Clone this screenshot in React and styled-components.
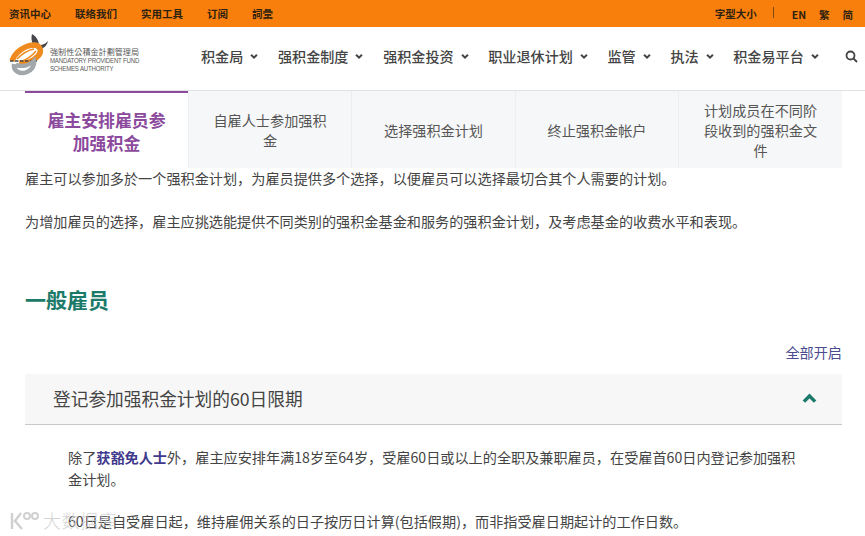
import React from "react";
import styled, { createGlobalStyle } from "styled-components";

const Global = createGlobalStyle`
  html, body { margin: 0; padding: 0; height: 536px; overflow: hidden; background: #fff; }
  body { font-family: "Noto Sans CJK SC", "Noto Sans", sans-serif; color: #333; }
  * { box-sizing: border-box; }
`;

const Page = styled.div`
  position: relative;
  width: 865px;
  height: 536px;
  overflow: hidden;
`;

const TopBar = styled.div`
  height: 27px;
  background: #f97f0c;
  display: flex;
  align-items: center;
  justify-content: space-between;
  padding: 0 12px 1px 9px;
  font-size: 10.5px;
  font-weight: 700;
  color: #2e2210;
`;

const TopGroup = styled.div`
  display: flex;
  align-items: center;
  gap: ${(p) => p.$gap}px;
`;

const SizeLabel = styled.span`
  margin-right: 3px;
`;

const Divider = styled.span`
  width: 1px;
  height: 11px;
  background: #7a4a10;
  margin: 0 5px 2px 0;
`;

const Lang = styled.span`
  padding-top: 2px;
`;

const Header = styled.header`
  height: 64px;
  display: flex;
  align-items: center;
  border-bottom: 1px solid #e2e2e2;
  padding: 0 7px 5px 9px;
`;

const Logo = styled.div`
  display: flex;
  align-items: center;
  gap: 1px;
  width: 192px;
  flex: none;
  margin-top: 4px;

  svg {
    margin-bottom: 6px;
    flex: none;
  }
`;

const LogoText = styled.div`
  display: flex;
  flex-direction: column;
  color: #5a5a5a;
  padding-top: 2px;
`;

const LogoCn = styled.span`
  font-family: "Noto Sans CJK TC", serif;
  font-size: 8.1px;
  line-height: 11px;
  white-space: nowrap;
`;

const LogoEn = styled.span`
  font-family: "Liberation Sans", sans-serif;
  font-size: 8px;
  line-height: 8px;
  letter-spacing: -0.25px;
  white-space: nowrap;
  transform: scaleX(0.76);
  transform-origin: left center;
`;

const Nav = styled.nav`
  flex: 1;
  display: flex;
  align-items: center;
  gap: 18.7px;
  font-size: 14.1px;
  font-weight: 500;
  color: #444;
`;

const NavItem = styled.div`
  display: flex;
  align-items: center;
  gap: 6px;
  white-space: nowrap;
`;

const SearchBtn = styled.span`
  margin-left: auto;
  display: flex;
`;

const Tabs = styled.div`
  margin: 0 23px 0 25px;
  display: grid;
  grid-template-columns: 163px 163px 164px 163px 164px;
  height: 77px;
`;

const Tab = styled.div`
  display: flex;
  align-items: center;
  justify-content: center;
  text-align: center;
  padding: 0 ${(p) => (p.$active ? 20 : 24)}px;
  background: ${(p) => (p.$active ? "#fff" : "#f6f7f8")};
  border-top: ${(p) => (p.$active ? "2px solid #8b4a9c" : "none")};
  border-left: ${(p) => (p.$active ? "none" : "1px solid #eceeef")};
  color: ${(p) => (p.$active ? "#8b4a9c" : "#555")};
  font-size: ${(p) => (p.$active ? 16.9 : 14.15)}px;
  font-weight: ${(p) => (p.$active ? 700 : 400)};
  line-height: ${(p) => (p.$active ? 23 : 20)}px;
`;

const Main = styled.main`
  margin-top: -1px;
  padding: 0 23px 0 25px;
`;

const Para = styled.p`
  margin: 0 0 ${(p) => p.$after || 0}px;
  font-size: 14.15px;
  line-height: 22px;
  color: #444;
`;

const Heading = styled.h2`
  margin: 51px 0 0;
  font-size: 21px;
  line-height: 32px;
  font-weight: 700;
  color: #1c7a6a;
`;

const OpenAll = styled.div`
  margin-top: 25px;
  height: 24px;
  line-height: 24px;
  text-align: right;
  font-size: 14.15px;
  color: #4b4b8f;
`;

const AccHead = styled.div`
  margin-top: 10px;
  height: 51px;
  background: #f7f7f7;
  border-bottom: 1px solid #c9c9c9;
  display: flex;
  align-items: center;
  justify-content: space-between;
  padding: 0 25px 2px 28px;
  font-size: 17.7px;
  color: #444;
`;

const AccBody = styled.div`
  padding: 21px 44px 0 43px;
`;

const Strong = styled.b`
  color: #3f3a8c;
  font-weight: 700;
`;

const Watermark = styled.div`
  position: absolute;
  left: 9px;
  bottom: 3px;
  display: flex;
  align-items: center;
  gap: 3px;
  color: rgba(205, 205, 205, 0.85);
  font-size: 18px;
  font-weight: 300;
  letter-spacing: 0.5px;
  line-height: 26px;
  pointer-events: none;
`;

const Chevron = ({ up, size = 12, color = "#444", w = 2.4 }) => (
  <svg width={size} height={size} viewBox="0 0 12 12" fill="none">
    <path d={up ? "M1.5 8.5 L6 4 L10.5 8.5" : "M2.5 4.5 L6 8 L9.5 4.5"} stroke={color} strokeWidth={w} />
  </svg>
);

const navItems = ["积金局", "强积金制度", "强积金投资", "职业退休计划", "监管", "执法", "积金易平台"];

export default function App() {
  return (
    <Page>
      <Global />
      <TopBar>
        <TopGroup $gap={24}>
          <span>资讯中心</span>
          <span>联络我们</span>
          <span>实用工具</span>
          <span>订阅</span>
          <span>詞彙</span>
        </TopGroup>
        <TopGroup $gap={13}>
          <SizeLabel>字型大小</SizeLabel>
          <Divider />
          <Lang>EN</Lang>
          <Lang>繁</Lang>
          <Lang>简</Lang>
        </TopGroup>
      </TopBar>
      <Header>
        <Logo>
          <svg width="40" height="44" viewBox="0 0 40 44" fill="none">
            <path d="M23 1 C27 3 30 8 30 12 C35 12 37 10 39 8 C38 13 34 16 30 16 C25 16 21 8 23 1Z" fill="#46464a" />
            <path d="M3 28 C6 19 16 12 26 12 C32 13 33 19 29 23 C25 28 17 31 10 30" stroke="#ee8a1e" strokeWidth="5.5" />
            <path d="M8 26 C13 21 19 17 25 16 M11 29 C17 27 23 23 27 18" stroke="#ee8a1e" strokeWidth="1.5" />
            <path d="M1 28 H28" stroke="#4a4a4a" strokeWidth="1.6" strokeDasharray="3.5 1.5" />
            <path d="M5 31 C4 38 11 42 18 39 C23 37 26 32 25 28 C21 32 14 34 7 32" stroke="#a2a7aa" strokeWidth="4.5" />
          </svg>
          <LogoText>
            <LogoCn>強制性公積金計劃管理局</LogoCn>
            <LogoEn>MANDATORY PROVIDENT FUND</LogoEn>
            <LogoEn>SCHEMES AUTHORITY</LogoEn>
          </LogoText>
        </Logo>
        <Nav>
          {navItems.map((t) => (
            <NavItem key={t}>
              {t}
              <Chevron size={10} />
            </NavItem>
          ))}
          <SearchBtn>
            <svg width="13" height="13" viewBox="0 0 13 13" fill="none" stroke="#444" strokeWidth="1.8">
              <circle cx="5.5" cy="5.5" r="4" />
              <path d="M8.5 8.5 L12 12" />
            </svg>
          </SearchBtn>
        </Nav>
      </Header>
      <Tabs>
        <Tab $active>雇主安排雇员参加强积金</Tab>
        <Tab>自雇人士参加强积金</Tab>
        <Tab>选择强积金计划</Tab>
        <Tab>终止强积金帐户</Tab>
        <Tab>计划成员在不同阶段收到的强积金文件</Tab>
      </Tabs>
      <Main>
        <Para $after={21}>雇主可以参加多於一个强积金计划，为雇员提供多个选择，以便雇员可以选择最切合其个人需要的计划。</Para>
        <Para>为增加雇员的选择，雇主应挑选能提供不同类别的强积金基金和服务的强积金计划，及考虑基金的收费水平和表现。</Para>
        <Heading>一般雇员</Heading>
        <OpenAll>全部开启</OpenAll>
        <AccHead>
          登记参加强积金计划的60日限期
          <Chevron up size={15} color="#1c7a6a" w={2.8} />
        </AccHead>
        <AccBody>
          <Para $after={20}>除了<Strong>获豁免人士</Strong>外，雇主应安排年满18岁至64岁，受雇60日或以上的全职及兼职雇员，在受雇首60日内登记参加强积金计划。</Para>
          <Para>60日是自受雇日起，维持雇佣关系的日子按历日计算(包括假期)，而非指受雇日期起计的工作日数。</Para>
        </AccBody>
      </Main>
      <Watermark>
        <svg width="31" height="22" viewBox="0 0 31 22" fill="none" stroke="rgba(205,205,205,.95)" strokeWidth="2.4">
          <path d="M3 4 V20 M12 4 L6 12 L13 20" />
          <circle cx="18" cy="7" r="3" strokeWidth="2" />
          <circle cx="26" cy="7" r="3" strokeWidth="2" />
        </svg>
        大数据库
      </Watermark>
    </Page>
  );
}
